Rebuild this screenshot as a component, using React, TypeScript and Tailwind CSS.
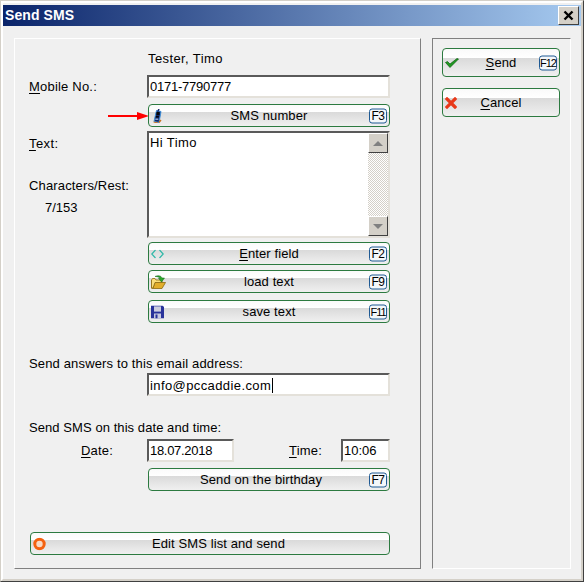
import React from "react";

const Key = ({ k }: { k: string }) => (
  <span
    className={
      "absolute right-[2px] top-1/2 flex h-[15px] w-[18px] -translate-y-1/2 items-center justify-center rounded-[3px] border border-[#1f5a94] bg-[#f4f7fa] leading-none text-black " +
      (k.length > 2 ? "text-[11px] tracking-[-1px]" : "text-[12px] tracking-[-0.6px]")
    }
  >
    {k}
  </span>
);

const Btn = ({
  label,
  k,
  icon,
  className = "",
}: {
  label: React.ReactNode;
  k?: string;
  icon?: React.ReactNode;
  className?: string;
}) => (
  <div
    className={
      "relative flex h-[23px] shrink-0 items-center justify-center rounded-[4px] border border-[#2c7a40] bg-[linear-gradient(to_bottom,#fafafa_0%,#ffffff_33%,#dadada_34%,#f0f0f0_100%)] text-[13px] tracking-[0.1px] text-black " +
      className
    }
  >
    {icon && <span className="absolute left-[2px] top-1/2 flex w-[18px] -translate-y-1/2 items-center justify-start">{icon}</span>}
    <span>{label}</span>
    {k && <Key k={k} />}
  </div>
);

const Sunken = ({ className = "", children }: { className?: string; children?: React.ReactNode }) => (
  <div
    className={
      "border-2 border-t-[#5a5a5a] border-l-[#5a5a5a] border-r-[#e4e1da] border-b-[#e4e1da] bg-white pl-[1px] text-[13px] leading-[19px] text-black " +
      className
    }
  >
    {children}
  </div>
);

const U = ({ children }: { children: React.ReactNode }) => <span className="underline underline-offset-2">{children}</span>;

const Phone = () => (
  <svg width="9" height="14" viewBox="0 0 9 14" className="ml-[2px]">
    <path d="M1 12.5 L3.5 1.5 L8 2.5 L6 13.5 Z" fill="#14276b" stroke="#3f8fd8" strokeWidth="1" />
    <rect x="3.5" y="3" width="3" height="3" fill="#050505" />
    <rect x="2.8" y="7" width="3" height="1.5" fill="#050505" />
    <rect x="2.3" y="9.5" width="3" height="1.5" fill="#8aa4cf" />
    <path d="M6 13.5 L8 11" stroke="#c9701f" strokeWidth="1.3" />
    <path d="M0.5 13 L5 14" stroke="#c9701f" strokeWidth="1" />
    <path d="M5 2 L6 0" stroke="#14276b" strokeWidth="1.5" />
  </svg>
);

const Brackets = () => (
  <svg width="13" height="9" viewBox="0 0 13 9" fill="none">
    <path d="M4.5 0.5 L0.8 4.5 L4.5 8.5" stroke="#2fb8a8" strokeWidth="1.2" />
    <path d="M8.5 0.5 L12.2 4.5 L8.5 8.5" stroke="#2fb8a8" strokeWidth="1.2" />
  </svg>
);

const Folder = () => (
  <svg width="15" height="14" viewBox="0 0 15 14">
    <path d="M0.5 5 L0.5 13 Q0.5 13.5 1.5 13.5 L11 13.5 L14.5 7.5 L4 7.5 L2 13 Z" fill="#e2ae2c" stroke="#8c6a10" strokeWidth="0.8" />
    <path d="M0.5 5 L1.5 3.5 L4 3.5 L5 5 L11 5 L11 7.5 L4 7.5 L2 13 L0.5 13 Z" fill="#f9de7c" stroke="#8c6a10" strokeWidth="0.8" />
    <path d="M4 1.5 C7 0 10 0.5 11 3 L13.5 3 L10.5 7 L7.5 3.2 L9 3.2 C8.5 2.3 6.5 1.5 4 1.5 Z" fill="#2aa52a" stroke="#12661a" strokeWidth="0.5" />
  </svg>
);

const Disk = () => (
  <svg width="13" height="13" viewBox="0 0 13 13">
    <path d="M0 0 H11.5 L13 1.5 V13 H0 Z" fill="#29339a" />
    <rect x="3" y="1" width="7" height="5" fill="#f2f2f2" />
    <rect x="3" y="2" width="7" height="1" fill="#a9a9c9" />
    <rect x="3" y="4" width="7" height="1" fill="#a9a9c9" />
    <rect x="3" y="8" width="7" height="5" fill="#c9cbe0" />
    <rect x="4.5" y="9" width="2" height="4" fill="#29339a" />
  </svg>
);

const Ring = () => (
  <svg width="13" height="13" viewBox="0 0 13 13">
    <circle cx="6.5" cy="6.5" r="4.7" fill="#f7d8c2" stroke="#f4610f" strokeWidth="3" />
  </svg>
);

const Check = () => (
  <svg width="14" height="10" viewBox="0 0 14 10">
    <path d="M0.5 4.5 L2.5 3.5 L5 6 L12 0.5 L13.5 1 L5 9.5 Z" fill="#1f9a1f" stroke="#0c5a12" strokeWidth="0.7" />
  </svg>
);

const Cross = () => (
  <svg width="12" height="12" viewBox="0 0 12 12">
    <path d="M2 2 L10 10 M10 2 L2 10" stroke="#e8391a" strokeWidth="3.2" strokeLinecap="square" />
  </svg>
);

const Scroll = ({ up }: { up?: boolean }) => (
  <div className="flex h-[20px] w-[20px] shrink-0 items-center justify-center border border-t-white border-l-white border-r-[#404040] border-b-[#404040] bg-[#d4d0c8]">
    <div
      className={
        "h-0 w-0 border-x-[5px] border-x-transparent " +
        (up ? "border-b-[5px] border-b-[#808080]" : "border-t-[5px] border-t-[#808080]")
      }
    />
  </div>
);

export default function App() {
  return (
    <div className="h-[582px] w-[584px] border border-t-[#d4d0c8] border-l-[#d4d0c8] border-r-[#404040] border-b-[#404040] font-['Liberation_Sans',Arial,sans-serif] text-[13px] leading-[15px] text-black">
      <div className="flex h-full w-full flex-col border-2 border-t-white border-l-white border-r-[#d4d0c8] border-b-[#d4d0c8] bg-[#f0f0f0]">
        <div className="mt-[2px] flex h-[21px] shrink-0 items-center justify-between bg-[linear-gradient(to_right,#0a246a,#a6caf0)] pl-[2px] pr-[2px]">
          <span className="text-[14px] font-bold tracking-[0.1px] text-white">Send SMS</span>
          <div className="flex h-[19px] w-[21px] items-center justify-center border border-t-white border-l-white border-r-[#404040] border-b-[#404040] bg-[#d4d0c8]">
            <svg width="11" height="11" viewBox="0 0 11 11">
              <path d="M1.5 1.5 L9.5 9.5 M9.5 1.5 L1.5 9.5" stroke="#000" strokeWidth="2.4" />
            </svg>
          </div>
        </div>

        <div className="flex min-h-0 flex-1 pl-[11px] pt-[12px]">
          {/* left panel */}
          <div className="flex h-[531px] w-[407px] flex-col border border-t-white border-l-white border-r-[#808080] border-b-[#808080] pl-[14px] pr-[30px]">
            <div className="ml-[119px] mt-[12px] h-[15px] tracking-[0.4px]">Tester, Timo</div>

            <div className="mt-[9px] flex items-center">
              <span className="w-[118px] shrink-0 tracking-[0.2px]"><U>M</U>obile No.:</span>
              <Sunken className="h-[23px] w-[243px] tracking-[-0.25px]">0171-7790777</Sunken>
            </div>

            <div className="relative ml-[119px] mt-[6px] flex flex-col">
              <svg width="41" height="10" viewBox="0 0 41 10" className="absolute left-[-40px] top-[7px]">
                <path d="M0 4 H29 V1 L41 5 L29 9 V6 H0 Z" fill="#ff0000" />
              </svg>
              <Btn label="SMS number" k="F3" icon={<Phone />} />
            </div>

            <div className="mt-[4px] flex">
              <div className="w-[118px] shrink-0 pt-[5px]">
                <div className="tracking-[0.4px]"><U>T</U>ext:</div>
                <div className="mt-[27px] tracking-[0.15px]">Characters/Rest:</div>
                <div className="ml-[16px] mt-[7px]">7/153</div>
              </div>
              <div className="flex h-[107px] w-[243px] border-2 border-t-[#5a5a5a] border-l-[#5a5a5a] border-r-[#e4e1da] border-b-[#e4e1da] bg-white">
                <div className="flex-1 pl-[1px] pt-[2px] text-[13px] leading-[15px] tracking-[0.4px]">Hi Timo</div>
                <div className="flex w-[20px] flex-col justify-between bg-[repeating-conic-gradient(#d4d0c8_0%_25%,#ffffff_0%_50%)] bg-[length:2px_2px]">
                  <Scroll up />
                  <Scroll />
                </div>
              </div>
            </div>

            <Btn className="ml-[119px] mt-[4px]" label={<><U>E</U>nter field</>} k="F2" icon={<Brackets />} />
            <Btn className="ml-[119px] mt-[5px]" label="load text" k="F9" icon={<Folder />} />
            <Btn className="ml-[119px] mt-[7px]" label="save text" k="F11" icon={<Disk />} />

            <div className="mt-[33px] h-[15px] tracking-[0.15px]">Send answers to this email address:</div>
            <div className="ml-[118px] mt-[2px]">
              <Sunken className="h-[23px] w-[243px] tracking-[0.4px]">
                info@pccaddie.com<span className="ml-[1px] inline-block h-[15px] w-[1px] translate-y-[3px] bg-black" />
              </Sunken>
            </div>

            <div className="mt-[24px] h-[15px] tracking-[0.07px]">Send SMS on this date and time:</div>
            <div className="mt-[4px] flex items-center">
              <span className="ml-[52px] w-[66px] shrink-0 tracking-[0.2px]"><U>D</U>ate:</span>
              <Sunken className="h-[23px] w-[87px] tracking-[-0.3px]">18.07.2018</Sunken>
              <span className="ml-[55px] w-[52px] shrink-0 tracking-[0.2px]"><U>T</U>ime:</span>
              <Sunken className="h-[23px] w-[49px]">10:06</Sunken>
            </div>
            <Btn className="ml-[119px] mt-[6px] pr-[16px]" label="Send on the birthday" k="F7" />

            <Btn className="ml-[1px] mt-[41px] pl-[17px]" label="Edit SMS list and send" icon={<Ring />} />
          </div>

          {/* right panel */}
          <div className="ml-[11px] flex h-[531px] w-[139px] flex-col gap-[11px] border border-t-[#808080] border-l-[#808080] border-r-white border-b-white pl-[9px] pr-[10px] pt-[9px]">
            <Btn className="h-[29px]" label={<><U>S</U>end</>} k="F12" icon={<Check />} />
            <Btn className="h-[29px]" label={<><U>C</U>ancel</>} icon={<Cross />} />
          </div>
        </div>
      </div>
    </div>
  );
}
